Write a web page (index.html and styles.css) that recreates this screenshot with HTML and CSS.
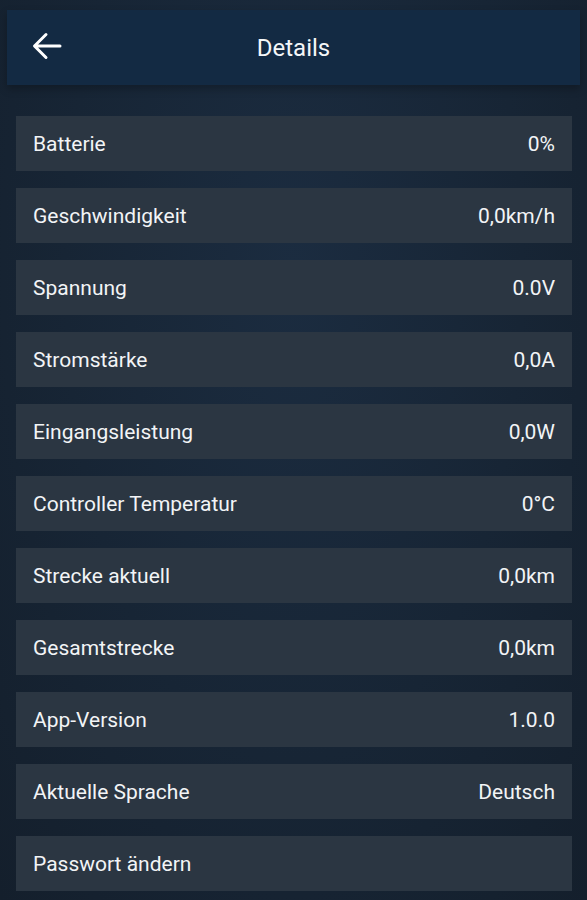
FILE: index.html
```html
<!DOCTYPE html>
<html lang="de">
<head>
<meta charset="utf-8">
<title>Details</title>
<link rel="stylesheet" href="styles.css">
</head>
<body>
<div class="screen">
  <header class="topbar">
    <svg class="back" viewBox="0 0 30 28" width="30" height="28" aria-hidden="true">
      <path d="M28 14H3M14 2.5L2.5 14L14 25.5" fill="none" stroke="#ffffff" stroke-width="3" stroke-linecap="round" stroke-linejoin="round"/>
    </svg>
    <h1 class="title">Details</h1>
  </header>
  <ul class="list">
    <li class="row"><span>Batterie</span><span>0%</span></li>
    <li class="row"><span>Geschwindigkeit</span><span>0,0km/h</span></li>
    <li class="row"><span>Spannung</span><span>0.0V</span></li>
    <li class="row"><span>Stromstärke</span><span>0,0A</span></li>
    <li class="row"><span>Eingangsleistung</span><span>0,0W</span></li>
    <li class="row"><span>Controller Temperatur</span><span>0°C</span></li>
    <li class="row"><span>Strecke aktuell</span><span>0,0km</span></li>
    <li class="row"><span>Gesamtstrecke</span><span>0,0km</span></li>
    <li class="row"><span>App-Version</span><span>1.0.0</span></li>
    <li class="row"><span>Aktuelle Sprache</span><span>Deutsch</span></li>
    <li class="row"><span>Passwort ändern</span><span></span></li>
  </ul>
</div>
</body>
</html>
```

FILE: styles.css
```css
* { box-sizing: border-box; }
html, body {
  margin: 0;
  padding: 0;
  width: 587px;
  height: 900px;
  overflow: hidden;
}
body {
  font-family: Roboto, "Noto Sans", sans-serif;
  color: #f2f4f6;
  background: radial-gradient(ellipse at 50% 30%, #1b2c40 0%, #172535 55%, #141f2c 100%);
}
.screen {
  padding: 10px 7px 0 7px;
}
.topbar {
  height: 75px;
  background: #132a43;
  display: flex;
  align-items: center;
  justify-content: center;
  position: relative;
  box-shadow: 0 4px 8px rgba(0,0,0,0.25);
}
.back {
  position: absolute;
  left: 25px;
  top: 22px;
}
.title {
  margin: 0;
  font-size: 24px;
  font-weight: 400;
  color: #f4f6f8;
  letter-spacing: 0;
}
.list {
  list-style: none;
  margin: 31px 8px 0 9px;
  padding: 0;
  display: flex;
  flex-direction: column;
  gap: 17px;
}
.row {
  height: 55px;
  background: #2b3642;
  display: flex;
  align-items: center;
  justify-content: space-between;
  padding: 1px 17px 0 17px;
  font-size: 21px;
}
```
